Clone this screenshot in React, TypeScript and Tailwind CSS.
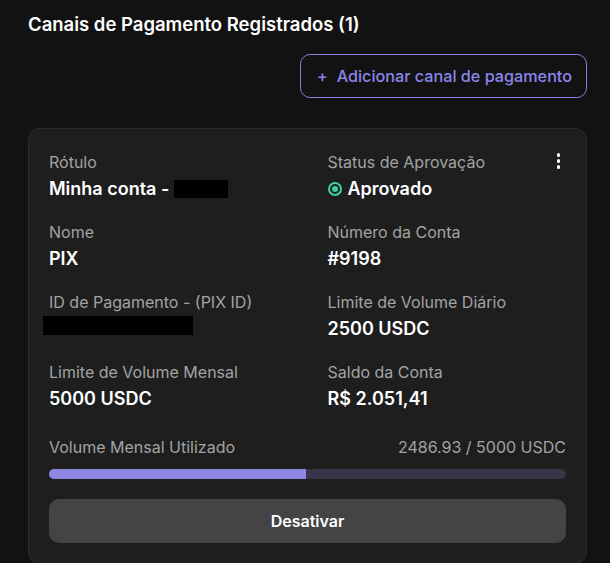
import React from "react";

function Field({ label, value, children }: { label: string; value?: string; children?: React.ReactNode }) {
  return (
    <div className="flex flex-col h-[70px]">
      <div className="text-[16px] leading-[20px] text-[#a3a3a3]">{label}</div>
      <div className="mt-[5px] text-[18px] leading-[24px] font-semibold text-white">{children ?? value}</div>
    </div>
  );
}

export default function App() {
  return (
    <div
      className="w-[610px] h-[563px] overflow-hidden bg-[#121212] text-white"
      style={{ fontFamily: "Inter, 'Noto Sans', sans-serif" }}
    >
      <div className="pl-[28px] pr-[23px] pt-[12px]">
        <h2 className="text-[18.5px] leading-[24px] font-semibold text-white">Canais de Pagamento Registrados (1)</h2>
        <div className="flex justify-end mt-[18px]">
          <button className="h-[44px] pl-[16px] pr-[14px] rounded-[10px] border border-[#8880e0] text-[#8d86ea] text-[16.2px] font-medium flex items-center gap-[9px]">
            <span className="text-[16px]">+</span>
            <span>Adicionar canal de pagamento</span>
          </button>
        </div>
        <div className="mt-[30px] rounded-[12px] border border-[#2c2c2c] bg-[#1e1e1e] px-[20px] pt-[23px] pb-[20px] relative">
          <button className="absolute right-[24px] top-[22px] flex flex-col gap-[2.5px] p-[2px]">
            <span className="w-[3.5px] h-[3.5px] rounded-full bg-white" />
            <span className="w-[3.5px] h-[3.5px] rounded-full bg-white" />
            <span className="w-[3.5px] h-[3.5px] rounded-full bg-white" />
          </button>
          <div className="grid grid-cols-2 gap-x-10">
            <Field label="Rótulo">
              <span className="flex items-center">
                Minha conta -<span className="ml-[5px] inline-block w-[54px] h-[18px] bg-black" />
              </span>
            </Field>
            <Field label="Status de Aprovação">
              <span className="flex items-center gap-[6px]">
                <span className="w-[14px] h-[14px] rounded-full border-2 border-[#3dd39b] flex items-center justify-center">
                  <span className="w-[6px] h-[6px] rounded-full bg-[#3dd39b]" />
                </span>
                Aprovado
              </span>
            </Field>
            <Field label="Nome" value="PIX" />
            <Field label="Número da Conta" value="#9198" />
            <Field label="ID de Pagamento - (PIX ID)">
              <span className="block w-[150px] h-[19px] bg-black -ml-[6px] mt-[-1px]" />
            </Field>
            <Field label="Limite de Volume Diário" value="2500 USDC" />
            <Field label="Limite de Volume Mensal" value="5000 USDC" />
            <Field label="Saldo da Conta" value="R$ 2.051,41" />
          </div>
          <div className="mt-[5px] flex justify-between text-[16px] leading-[20px] text-[#a3a3a3]">
            <span>Volume Mensal Utilizado</span>
            <span>2486.93 / 5000 USDC</span>
          </div>
          <div className="mt-[12px] h-[10px] rounded-full bg-[#38354b] overflow-hidden">
            <div className="h-full bg-[#8f87e4]" style={{ width: `${(2486.93 / 5000) * 100}%` }} />
          </div>
          <button className="mt-[20px] w-full h-[44px] rounded-[10px] bg-[#444444] text-white text-[16px] font-semibold">
            Desativar
          </button>
        </div>
      </div>
    </div>
  );
}
